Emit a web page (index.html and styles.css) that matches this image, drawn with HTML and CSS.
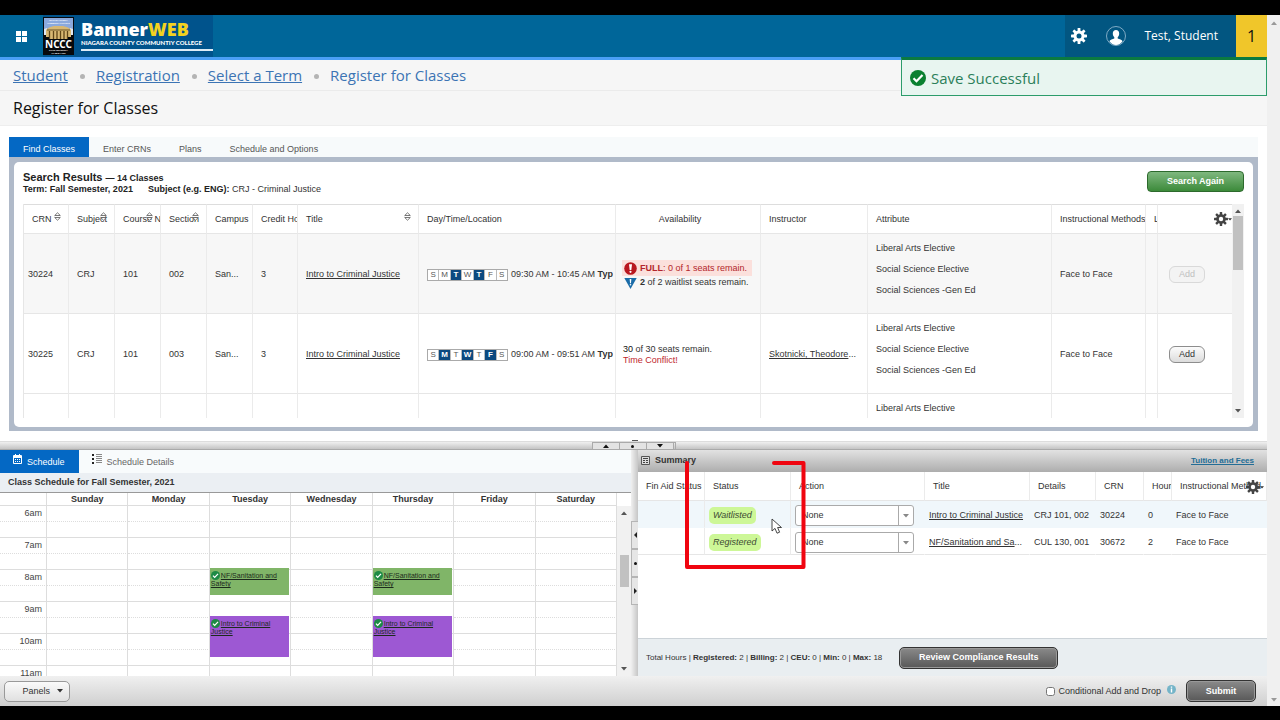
FILE: index.html
```html
<!DOCTYPE html>
<html lang="en">
<head>
<meta charset="utf-8">
<title>Register for Classes</title>
<link rel="stylesheet" href="styles.css">
</head>
<body>
<svg class="defs" aria-hidden="true">
  <symbol id="gear" viewBox="0 0 16 16"><g fill="currentColor"><rect x="6.600" y="0" width="2.800" height="16" rx=".6"/><rect x="6.600" y="0" width="2.800" height="16" rx=".6" transform="rotate(45 8 8)"/><rect x="6.600" y="0" width="2.800" height="16" rx=".6" transform="rotate(90 8 8)"/><rect x="6.600" y="0" width="2.800" height="16" rx=".6" transform="rotate(135 8 8)"/><circle cx="8" cy="8" r="5.500"/></g><circle cx="8" cy="8" r="2.500" fill="var(--hole)"/></symbol>
  <symbol id="ok" viewBox="0 0 16 16"><circle cx="8" cy="8" r="8" fill="currentColor"/><path d="M3.500 8.300l3 3 6-6.300" fill="none" stroke="#fff" stroke-width="2.200"/></symbol>
  <symbol id="sort" viewBox="0 0 7 9"><path d="M.7 3.500L3.500.8l2.800 2.700zM.7 5.500l2.800 2.700 2.800-2.700z" fill="#fff" stroke="#555" stroke-width=".8"/></symbol>
  <symbol id="up" viewBox="0 0 6 4"><path d="M0 4l3-3.500L6 4z" fill="currentColor"/></symbol>
  <symbol id="down" viewBox="0 0 6 4"><path d="M0 0l3 3.500L6 0z" fill="currentColor"/></symbol>
</svg>
<div class="screen">
<div class="page">
  <header class="top">
    <button class="apps" aria-label="Menu"><svg width="11" height="11" viewBox="0 0 11 11" fill="#fff"><path d="M0 0h5v5H0zM6 0h5v5H6zM0 6h5v5H0zM6 6h5v5H6z"/></svg></button>
    <div class="brand">
      <svg width="31" height="38" viewBox="0 0 31 38">
        <rect width="31" height="38" fill="#07090c"/><rect x="1" y="1" width="29" height="17" fill="#8ba9dd"/>
        <path d="M1 12l3-1v7H1zM30 12l-3-1v7h3z" fill="#dfe7f2"/>
        <path d="M3 13q2-3 8-4h9q6 1 8 4v9H3z" fill="#d8b873"/>
        <path d="M4 13h23" stroke="#6d5426"/><path d="M6.500 14v8M10.500 14v8M14 14v8M17.500 14v8M21 14v8M24.500 14v8" stroke="#604618" stroke-width="1.300"/>
        <path d="M0 18h3v2h3v2h19v-2h3v-2h3v20H0z" fill="#07090c"/>
        <text x="15.500" y="4" class="seal">NIAGARA COUNTY</text><text x="15.500" y="7" class="seal">COMMUNITY COLLEGE</text>
        <text x="15.500" y="31" class="nccc">NCCC</text>
        <text x="15.500" y="34" class="seal">STATE UNIVERSITY</text><text x="15.500" y="36.500" class="seal">OF NEW YORK</text>
      </svg>
      <div class="wordmark"><b>Banner<i>WEB</i></b><span>NIAGARA COUNTY COMMUNTIY COLLEGE</span></div>
    </div>
    <div class="user">
      <button aria-label="Settings"><svg class="g-top" width="16" height="16"><use href="#gear"/></svg></button>
      <svg width="20" height="20" viewBox="0 0 20 20"><circle cx="10" cy="10" r="9.500" fill="none" stroke="#9fc0d5" stroke-width=".8"/><path d="M10 4c2 0 3.200 1.400 3.200 3.600 0 1.800-.7 2.900-1.500 3.600v1.200c1.600.7 4.300 1.300 4.900 2.900C15 17.700 12.700 19 10 19s-5-1.300-6.600-3.700c.6-1.600 3.300-2.200 4.900-2.900v-1.200c-.8-.7-1.500-1.800-1.500-3.600C6.800 5.400 8 4 10 4z" fill="#fff"/></svg>
      <span class="uname">Test, Student</span>
    </div>
    <button class="count">1</button>
    <div class="toast" role="status"><svg width="16" height="16"><use href="#ok"/></svg>Save Successful</div>
  </header>

  <nav class="crumbs"><a href="#">Student</a><i></i><a href="#">Registration</a><i></i><a href="#">Select a Term</a><i></i><span>Register for Classes</span></nav>
  <h1>Register for Classes</h1>

  <main class="finder">
    <div class="tabs"><button class="on">Find Classes</button><button>Enter CRNs</button><button>Plans</button><button>Schedule and Options</button></div>
    <div class="frame"><div class="card">
      <div class="rhead">
        <div><h2>Search Results <small>— 14 Classes</small></h2>
        <p><b>Term: Fall Semester, 2021</b><span><b>Subject (e.g. ENG):</b> CRJ - Criminal Justice</span></p></div>
        <button class="again">Search Again</button>
      </div>
      <div class="gridwrap">
        <div class="gridclip">
        <table class="results">
          <colgroup><col class="c45"><col class="c46"><col class="c46"><col class="c46"><col class="c46"><col class="c45"><col class="ctitle"><col class="ctime"><col class="cavail"><col class="cinst"><col><col class="cmeth"><col class="clink"><col class="cadd"></colgroup>
          <thead><tr><th>CRN<svg class="s"><use href="#sort"/></svg></th><th>Subject<svg class="s"><use href="#sort"/></svg></th><th>Course Number<svg class="s"><use href="#sort"/></svg></th><th>Section<svg class="s"><use href="#sort"/></svg></th><th>Campus</th><th>Credit Hours</th><th>Title<svg class="s"><use href="#sort"/></svg></th><th>Day/Time/Location</th><th class="mid">Availability</th><th>Instructor</th><th>Attribute</th><th>Instructional Methods</th><th>L</th><th class="tools"><button aria-label="Columns"><svg class="g-dark" width="14" height="14"><use href="#gear"/></svg><svg width="4" height="3"><use href="#down"/></svg></button></th></tr></thead>
          <tbody>
          <tr class="alt"><td class="crn">30224</td><td>CRJ</td><td>101</td><td>002</td><td>San...</td><td>3</td><td><a href="#">Intro to Criminal Justice</a></td>
            <td class="wcell"><div class="when"><span class="days"><i>S</i><i>M</i><i class="d">T</i><i>W</i><i class="d">T</i><i>F</i><i>S</i></span><span>09:30 AM - 10:45 AM <b>Type:</b></span></div></td>
            <td class="av"><div class="full"><svg width="13" height="13" viewBox="0 0 13 13"><circle cx="6.500" cy="6.500" r="6.300" fill="#b9171f"/><path d="M5 2.200h3L7.300 8H5.700z" fill="#fff"/><circle cx="6.500" cy="9.800" r="1.100" fill="#fff"/></svg><span><b>FULL</b>: 0 of 1 seats remain.</span></div><div class="wait"><svg width="13" height="12" viewBox="0 0 13 12"><path d="M.3 1h12.400L6.500 12z" fill="#1a6ca8"/><path d="M5.700 2h1.600L7 6.300H6z" fill="#fff"/><circle cx="6.500" cy="7.800" r=".8" fill="#fff"/></svg><span><b>2</b> of 2 waitlist seats remain.</span></div></td>
            <td></td><td class="attr"><p>Liberal Arts Elective</p><p>Social Science Elective</p><p>Social Sciences -Gen Ed</p></td><td>Face to Face</td><td></td><td><button class="add" disabled>Add</button></td></tr>
          <tr><td class="crn">30225</td><td>CRJ</td><td>101</td><td>003</td><td>San...</td><td>3</td><td><a href="#">Intro to Criminal Justice</a></td>
            <td class="wcell"><div class="when"><span class="days"><i>S</i><i class="d">M</i><i>T</i><i class="d">W</i><i>T</i><i class="d">F</i><i>S</i></span><span>09:00 AM - 09:51 AM <b>Type:</b></span></div></td>
            <td class="av"><div><b class="semi">30</b> of 30 seats remain.</div><div class="red">Time Conflict!</div></td>
            <td><a href="#">Skotnicki, Theodore</a>...</td><td class="attr"><p>Liberal Arts Elective</p><p>Social Science Elective</p><p>Social Sciences -Gen Ed</p></td><td>Face to Face</td><td></td><td><button class="add">Add</button></td></tr>
          <tr><td></td><td></td><td></td><td></td><td></td><td></td><td></td><td></td><td></td><td></td><td class="attr"><p>Liberal Arts Elective</p></td><td></td><td></td><td></td></tr>
          </tbody>
        </table>
        </div>
        <div class="sb sb-grid"><svg width="6" height="4"><use href="#up"/></svg><i></i><svg width="6" height="4"><use href="#down"/></svg></div>
      </div>
    </div></div>
  </main>

  <div class="hsplit"><div class="hbtns"><button aria-label="Up"><svg width="6" height="4"><use href="#up"/></svg></button><button aria-label="Reset"><em></em></button><button aria-label="Down"><svg width="6" height="4"><use href="#down"/></svg></button></div></div>

  <div class="lower">
    <section class="sched">
      <div class="tabs2">
        <button class="on"><svg width="9" height="10" viewBox="0 0 9 10"><path d="M.5 1.500h8v8h-8z" fill="none" stroke="#fff"/><path d="M0 2h9v2H0zM2 0h1v3H2zM6 0h1v3H6zM2 5h1v1H2zM4 5h1v1H4zM6 5h1v1H6zM2 7h1v1H2zM4 7h1v1H4zM6 7h1v1H6z" fill="#fff"/></svg>Schedule</button>
        <button><svg width="10" height="10" viewBox="0 0 10 10"><path d="M0 0h2v2H0zM0 4h2v2H0zM0 8h2v2H0z" fill="#222"/><path d="M4 .5h6M4 2.500h6M4 4.500h6M4 6.500h6M4 8.500h6" stroke="#888"/></svg>Schedule Details</button>
      </div>
      <h3>Class Schedule for Fall Semester, 2021</h3>
      <div class="cal">
        <table>
          <colgroup><col class="ch"><col><col><col><col><col><col><col></colgroup>
          <thead><tr><th></th><th>Sunday</th><th>Monday</th><th>Tuesday</th><th>Wednesday</th><th>Thursday</th><th>Friday</th><th>Saturday</th></tr></thead>
          <tbody>
          <tr><th>6am</th><td></td><td></td><td></td><td></td><td></td><td></td><td></td></tr>
          <tr class="h"><th></th><td></td><td></td><td></td><td></td><td></td><td></td><td></td></tr>
          <tr><th>7am</th><td></td><td></td><td></td><td></td><td></td><td></td><td></td></tr>
          <tr class="h"><th></th><td></td><td></td><td></td><td></td><td></td><td></td><td></td></tr>
          <tr><th>8am</th><td></td><td></td><td><div class="ev g"><svg width="9" height="9"><use href="#ok"/></svg><a href="#">NF/Sanitation and Safety</a></div></td><td></td><td><div class="ev g"><svg width="9" height="9"><use href="#ok"/></svg><a href="#">NF/Sanitation and Safety</a></div></td><td></td><td></td></tr>
          <tr class="h"><th></th><td></td><td></td><td></td><td></td><td></td><td></td><td></td></tr>
          <tr><th>9am</th><td></td><td></td><td></td><td></td><td></td><td></td><td></td></tr>
          <tr class="h"><th></th><td></td><td></td><td><div class="ev p"><svg width="9" height="9"><use href="#ok"/></svg><a href="#">Intro to Criminal Justice</a></div></td><td></td><td><div class="ev p"><svg width="9" height="9"><use href="#ok"/></svg><a href="#">Intro to Criminal Justice</a></div></td><td></td><td></td></tr>
          <tr><th>10am</th><td></td><td></td><td></td><td></td><td></td><td></td><td></td></tr>
          <tr class="h"><th></th><td></td><td></td><td></td><td></td><td></td><td></td><td></td></tr>
          <tr><th>11am</th><td></td><td></td><td></td><td></td><td></td><td></td><td></td></tr>
          </tbody>
        </table>
        <div class="sb sb-cal"><svg width="6" height="4"><use href="#up"/></svg><i></i><svg width="6" height="4"><use href="#down"/></svg></div>
      </div>
    </section>

    <div class="vsplit"><button aria-label="Left"><svg width="3" height="6" viewBox="0 0 3 6"><path d="M3 0L0 3l3 3z" fill="#222"/></svg></button><button aria-label="Reset"><em></em></button><button aria-label="Right"><svg width="3" height="6" viewBox="0 0 3 6"><path d="M0 0l3 3-3 3z" fill="#222"/></svg></button></div>

    <section class="summary">
      <div class="shead"><svg width="9" height="9" viewBox="0 0 9 9"><path d="M.5.5h8v8h-8z" fill="#ddd" stroke="#555"/><path d="M2 2.500h5M2 4.500h2M5 4.500h2M2 6.500h2M5 6.500h2" stroke="#444"/></svg><h3>Summary</h3><a href="#">Tuition and Fees</a></div>
      <div class="sbody">
      <table class="reg">
        <colgroup><col class="r1"><col class="r2"><col class="r3"><col class="r4"><col class="r5"><col class="r6"><col class="r7"><col></colgroup>
        <thead><tr><th>Fin Aid Status</th><th>Status</th><th>Action</th><th>Title</th><th>Details</th><th>CRN</th><th>Hours</th><th>Instructional Method</th></tr></thead>
        <tbody>
        <tr class="alt"><td></td><td><span class="pill">Waitlisted</span></td><td><span class="sel"><select aria-label="Action for 30224"><option>None</option></select><svg width="6" height="4"><use href="#down"/></svg></span></td><td><a href="#">Intro to Criminal Justice</a></td><td>CRJ 101, 002</td><td>30224</td><td>0</td><td>Face to Face</td></tr>
        <tr><td></td><td><span class="pill">Registered</span></td><td><span class="sel"><select aria-label="Action for 30672"><option>None</option></select><svg width="6" height="4"><use href="#down"/></svg></span></td><td><a href="#">NF/Sanitation and Sa</a>...</td><td>CUL 130, 001</td><td>30672</td><td>2</td><td>Face to Face</td></tr>
        </tbody>
      </table>
      <button class="cols" aria-label="Columns"><svg class="g-dark" width="14" height="14"><use href="#gear"/></svg><svg width="4" height="3"><use href="#down"/></svg></button>
      </div>
      <div class="sfoot"><span>Total Hours | <b>Registered:</b> 2 | <b>Billing:</b> 2 | <b>CEU:</b> 0 | <b>Min:</b> 0 | <b>Max:</b> 18</span><button class="dark">Review Compliance Results</button></div>
      <svg class="mark" width="122" height="110" viewBox="0 0 122 110"><path d="M89 3h29.500v104H2V3" fill="none" stroke="#f00510" stroke-width="4" stroke-linecap="round" stroke-linejoin="round"/><path d="M87 59v12l3-2.600 2 4.800 2.600-1-2-4.700h3.900z" fill="#fff" stroke="#333" stroke-width=".9"/></svg>
    </section>
  </div>

  <footer class="bar">
    <button class="panels">Panels<svg width="6" height="4"><use href="#down"/></svg></button>
    <label><input type="checkbox">Conditional Add and Drop</label>
    <svg class="info" width="9" height="9" viewBox="0 0 9 9"><circle cx="4.500" cy="4.500" r="4.500" fill="#74b4c8"/><path d="M3.800 1.500h1.400v1.300H3.800zM3.800 3.500h1.400v4H3.800z" fill="#fff"/></svg>
    <button class="dark submit">Submit</button>
  </footer>
</div>
<div class="sb sb-page"><svg width="6" height="4"><use href="#up"/></svg><i></i><svg width="6" height="4"><use href="#down"/></svg></div>
</div>
</body>
</html>
```
FILE: styles.css
```css
* { box-sizing: border-box; }
body { margin: 0; background: #000; color: #333; font: 9px/11px "Liberation Sans", Arial, sans-serif; }
button { font: inherit; color: inherit; border: 0; padding: 0; background: none; }
h1, h2, h3, p { margin: 0; }
a { color: inherit; }
i { font-style: normal; }
svg { display: block; flex: none; }
.defs { display: none; }

.screen { display: flex; height: 100vh; padding: 15px 0 14px; }
.page { flex: 1; min-width: 0; display: flex; flex-direction: column; background: #fff; }

/* header */
.top { position: relative; display: flex; align-items: stretch; height: 45px; flex: none; background: #006699; border-bottom: 3px solid #4a9ff5; font-family: "Open Sans", sans-serif; color: #fff; }
.apps { padding: 0 11px 0 16px; }
.brand { display: flex; align-items: center; gap: 7px; margin-left: 5px; background: #00538c; }
.seal { font: bold 2px "Liberation Sans", sans-serif; fill: #fff; text-anchor: middle; }
.nccc { font: bold 10px "Noto Sans", sans-serif; fill: #fff; text-anchor: middle; }
.wordmark { width: 132px; border-bottom: 2px solid #dcebf6; padding-bottom: 2px; margin-bottom: 3px; }
.wordmark b { display: block; font: 800 18px/20px "Open Sans", sans-serif; }
.wordmark i { color: #f2d21f; }
.wordmark span { display: block; font: 900 6px/8px Lato, sans-serif; white-space: nowrap; }
.user { margin-left: auto; display: flex; align-items: center; gap: 19px; padding: 0 18px 0 6px; background: #025681; }
.uname { font-size: 12px; line-height: 16px; }
.g-top { --hole: #025681; color: #fff; }
.g-dark { --hole: #fff; color: #444; }
.count { width: 31px; background: #f0c62a; color: #111; font-size: 16px; }
.toast { position: absolute; z-index: 2; top: 42px; right: 0; width: 366px; height: 39px; display: flex; align-items: center; gap: 5px; padding-left: 8px; background: #e8f5f0; border: 1px solid #2c9c6b; border-top: 3px solid #0b7a41; color: #2b7f5a; font-size: 15px; line-height: 20px; }
.toast svg { color: #0a8030; }
.crumbs { display: flex; align-items: center; flex: none; height: 31px; padding-left: 13px; background: #f6f6f6; border-bottom: 1px solid #ebebeb; color: #3c74b4; font: 15px/20px "Open Sans", sans-serif; }
.crumbs i { width: 5px; height: 5px; margin: 3px 11px 0 12px; border-radius: 50%; background: #b4b4b4; }
h1 { flex: none; padding: 7px 13px 6px; background: #f6f6f6; border-bottom: 1px solid #eee; color: #111; font: 16px/21px "Open Sans", sans-serif; }

/* search results */
.finder { flex: none; padding: 11px 9px 10px; }
.tabs { display: flex; height: 20px; background: #f7fafb; color: #555; }
.tabs button { padding: 4px 14px 0; }
.tabs .on { background: #0468c4; color: #fff; }
.frame { padding: 5px; padding-bottom: 4px; background: #b0bac9; }
.card { padding: 9px; background: #fff; border-radius: 5px; }
.rhead { display: flex; justify-content: space-between; height: 33px; }
h2 { font-size: 11px; line-height: 12px; color: #222; }
h2 small { font-size: 9px; }
.rhead p span { margin-left: 15px; }
.rhead p b { color: #222; }
.again { width: 97px; height: 21px; border: 1px solid #2d6a2d; border-radius: 4px; background: linear-gradient(#7fb87f, #3c8a3a); color: #fff; font-weight: bold; }
.gridwrap { display: flex; height: 214px; }
.gridclip { flex: 1; min-width: 0; overflow: hidden; border-left: 1px solid #e6e6e6; }
.results, .reg, .cal table { width: 100%; table-layout: fixed; border-collapse: separate; border-spacing: 0; }
.results th, .results td, .reg th, .reg td { padding: 0 0 0 8px; text-align: left; font-weight: normal; white-space: nowrap; overflow: hidden; border-right: 1px solid #ebebeb; border-bottom: 1px solid #e6e6e6; }
.results th { position: relative; height: 30px; border-top: 1px solid #ddd; }
.results td { height: 80px; padding-top: 2px; }
.results .alt { background: #f7f7f7; }
.results th:last-child, .results td:last-child { border-right: 0; }
.results td.crn { padding-left: 4px; }
.results .mid { text-align: center; padding-right: 24px; }
.results .av { padding-left: 7px; }
.results .wcell { padding-right: 2px; }
.c46 { width: 46px; } .c45 { width: 45px; } .ctitle { width: 121px; } .ctime { width: 197px; } .cavail { width: 145px; } .cinst { width: 107px; } .cmeth { width: 94px; } .clink { width: 12px; } .cadd { width: 74px; }
.s { position: absolute; right: 7px; top: 7px; width: 7px; height: 9px; }
.tools button { display: flex; align-items: center; justify-content: flex-end; width: 100%; }
.when { display: flex; align-items: center; gap: 3px; overflow: hidden; }
.days { display: flex; flex: none; width: 81px; border: 1px solid #aaa; background: #fff; }
.days i { flex: 1; height: 10px; border-right: 1px solid #bbb; font-size: 8px; line-height: 10px; text-align: center; color: #555; }
.days i:last-child { border-right: 0; }
.days .d { background: #0c4a80; color: #fff; font-weight: bold; }
.full, .wait { display: flex; align-items: center; gap: 3px; width: 130px; padding-left: 2px; margin-left: -1px; }
.full { height: 16px; background: #fbe0dc; color: #b3262b; }
.wait { height: 13px; }
.red { color: #c0272d; }
.semi { font-weight: normal; color: #111; }
.results .attr { padding-top: 9px; vertical-align: top; line-height: 11px; }
.attr p { margin-bottom: 10px; }
.add { width: 36px; height: 17px; border: 1px solid #8d8d8d; border-radius: 6px; background: linear-gradient(#fcfcfc, #dcdcdc); color: #333; }
.results td .add { margin-left: 3px; display: block; }
.add:disabled { border-color: #d9d9d9; background: #f3f3f3; color: #c0c0c0; }

/* drawn scroll bars */
.sb { flex: none; display: flex; flex-direction: column; align-items: center; justify-content: space-between; background: #f1f1f1; color: #555; }
.sb i { background: #c1c1c1; }
.sb-grid { width: 12px; padding: 5px 0; }
.sb-grid i { width: 10px; height: 54px; margin: 3px 0 auto; }
.sb-cal { width: 14px; margin-top: 13px; padding: 5px 0; }
.sb-cal i { width: 9px; height: 32px; margin: 40px 0 auto; }
.sb-page { width: 13px; padding: 6px 0 4px; background: #f0f0f0; color: #999; }

/* splitters */
.hsplit { flex: none; display: flex; justify-content: center; height: 9px; background: linear-gradient(#f0f0f0, #c4c4c4); border-top: 1px solid #ddd; border-bottom: 1px solid #aaa; }
.hbtns { position: relative; display: flex; width: 84px; border: 1px solid #aaa; border-bottom: 0; }
.hbtns::before { content: ""; position: absolute; top: -3px; left: 39px; width: 6px; height: 1px; background: #555; }
.hbtns button { flex: 1; display: flex; justify-content: center; align-items: center; border-right: 1px solid #aaa; background: #e3e3e3; color: #111; }
em { display: block; width: 3px; height: 3px; border-radius: 50%; background: #111; }
.vsplit { flex: none; width: 7px; padding-top: 71px; background: linear-gradient(90deg, #f0f0f0, #c6c6c6); }
.vsplit button { display: flex; align-items: center; justify-content: center; width: 7px; height: 28px; border: 1px solid #b5b5b5; border-right: 0; background: #e6e6e6; }

/* schedule */
.lower { flex: 1; min-height: 0; display: flex; }
.sched, .summary { flex: 1 1 0; min-width: 0; display: flex; flex-direction: column; }
.sched { flex-basis: 2px; }
.tabs2 { display: flex; height: 23px; flex: none; background: #f8fbfc; color: #666; line-height: 12px; }
.tabs2 button { display: flex; align-items: flex-start; gap: 5px; padding: 6px 13px 0; }
.tabs2 button svg { margin-top: -2px; }
.tabs2 .on { padding-right: 14px; background: #0468c4; color: #fff; }
.sched h3 { flex: none; height: 20px; padding: 4px 8px 0; background: #ebeff3; border-bottom: 1px solid #999; font-size: 9px; line-height: 11px; color: #333; }
.cal { flex: 1 1 0; min-height: 0; display: flex; overflow: hidden; }
.cal table { flex: 1; height: 0; }
.cal .ch { width: 47px; }
.cal th, .cal td { height: 16px; padding: 0; border-right: 1px solid #ddd; border-bottom: 1px dotted #ddd; line-height: 11px; }
.cal .h th, .cal .h td { border-bottom: 1px solid #ddd; }
.cal thead th { height: 13px; border-bottom: 1px solid #ddd; color: #333; }
.cal tbody th { padding-right: 4px; text-align: right; font-weight: normal; color: #444; }
.cal td { position: relative; }
.ev { position: absolute; z-index: 1; top: -2px; left: 0; right: 1px; padding: 4px 0 0 1px; font-size: 7px; line-height: 8px; color: #1c2a1c; }
.ev svg { display: inline-block; vertical-align: middle; margin-right: 1px; margin-top: -2px; color: #1d8a45; }
.g { height: 27px; background: #80b568; }
.p { height: 41px; background: #9d58d3; }

/* summary */
.summary { position: relative; }
.shead { flex: none; display: flex; align-items: center; gap: 5px; height: 22px; padding: 0 13px 2px 3px; background: linear-gradient(#e2e2e2, #adadad); }
.shead h3 { font-size: 9px; line-height: 11px; }
.shead a { margin-left: auto; color: #236d96; font-weight: bold; font-size: 8px; }
.sbody { position: relative; flex: 1; min-height: 0; overflow: hidden; }
.reg th { height: 29px; }
.reg td { height: 27px; padding-top: 2px; }
.reg td:nth-child(n+3) { padding-left: 4px; border-right-color: transparent; }
.reg .alt { background: #f0f7fb; }
.reg .alt td { border-bottom-color: transparent; }
.r1 { width: 67px; } .r2 { width: 86px; } .r3 { width: 134px; } .r4 { width: 105px; } .r5 { width: 66px; } .r6 { width: 48px; } .r7 { width: 28px; }
.cols { position: absolute; top: 8px; right: 3px; display: flex; align-items: center; }
.pill { display: inline-block; margin-left: -4px; padding: 3px 4px; border-radius: 5px; background: #cdf797; font-style: italic; color: #3d4a33; }
.sel { position: relative; display: block; width: 119px; }
.sel::after { content: ""; position: absolute; top: 1px; bottom: 1px; right: 15px; border-left: 1px solid #aaa; }
.sel select { display: block; width: 100%; height: 21px; padding: 0 6px; appearance: none; border: 1px solid #aaa; border-radius: 3px; background: #fff; color: #333; font: inherit; }
.sel svg { position: absolute; right: 5px; top: 9px; color: #888; }
.sfoot { flex: none; display: flex; align-items: center; gap: 17px; height: 38px; padding: 0 8px; background: #e9eef1; border-top: 1px solid #ccd3d8; font-size: 8px; }
.dark { height: 22px; border: 1px solid #333; border-radius: 5px; background: linear-gradient(#8a8a8a, #585858); box-shadow: inset 0 0 0 1px #999; color: #fff; font-size: 9px; font-weight: bold; }
.sfoot .dark { width: 159px; }
.mark { position: absolute; left: 47px; top: 10px; z-index: 3; pointer-events: none; }

/* bottom bar */
.bar { flex: none; display: flex; align-items: center; height: 30px; padding: 0 11px 0 4px; background: linear-gradient(#f0f0f0, #cfcfcf); }
.panels { display: flex; align-items: center; justify-content: flex-end; gap: 7px; width: 66px; height: 21px; padding-right: 6px; border: 1px solid #999; border-radius: 5px; background: linear-gradient(#fafafa, #e0e0e0); }
.bar label { display: flex; align-items: center; gap: 3px; margin-left: auto; }
.bar input { width: 9px; height: 9px; margin: 0; }
.info { margin: 0 10px 3px 6px; }
.submit { width: 70px; }
```
